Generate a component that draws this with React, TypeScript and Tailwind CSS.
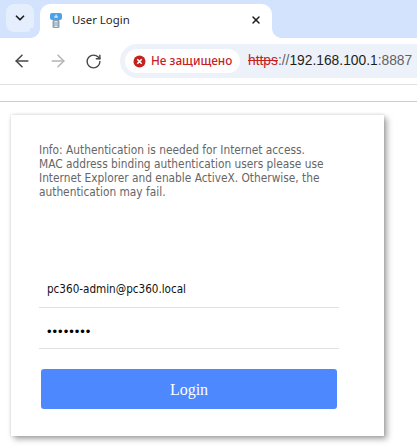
import { ArrowLeft, ArrowRight, ChevronDown, RotateCw, X } from "lucide-react";

function TabFavicon() {
  return (
    <svg width="12" height="15" viewBox="0 0 12 15" className="shrink-0">
      <rect x="0" y="0" width="12" height="7" rx="2" fill="#4aa3ea" />
      <rect x="5.5" y="1.5" width="1.2" height="3" fill="#e3f2fd" />
      <rect x="4" y="3.5" width="4" height="1" fill="#e3f2fd" />
      <rect x="2.5" y="7" width="7" height="8" rx="1" fill="#8fa3b5" />
      <rect x="4.5" y="8" width="3" height="6" fill="#dfe7ee" />
      <rect x="4.5" y="9.5" width="3" height="1" fill="#8fa3b5" />
      <rect x="4.5" y="11.5" width="3" height="1" fill="#8fa3b5" />
    </svg>
  );
}

function WarningIcon() {
  return (
    <svg width="13" height="13" viewBox="0 0 13 13" className="shrink-0">
      <circle cx="6.5" cy="6.5" r="6" fill="#c5221f" />
      <path d="M4.3 4.3l4.4 4.4M8.7 4.3l-4.4 4.4" stroke="#fff" strokeWidth="1.6" />
    </svg>
  );
}

export default function App() {
  return (
    <div className="flex h-[446px] w-[417px] flex-col overflow-hidden bg-white">
      {/* tab strip */}
      <div className="flex h-[38px] shrink-0 bg-[#d3e3fd] pt-1">
        <div className="ml-[6px] flex size-7 items-center justify-center rounded-lg bg-[#e4eefd]">
          <ChevronDown className="size-[14px] text-[#1f1f1f]" strokeWidth={3} />
        </div>
        <div className="relative ml-[6px] flex h-[34px] w-[232px] items-center rounded-t-[10px] bg-white pb-[2px] pl-[10px] pr-[10px]">
          <span className="absolute bottom-0 left-[-10px] size-[10px] bg-[radial-gradient(circle_at_0%_0%,#d3e3fd_9.5px,#ffffff_10.5px)]" />
          <span className="absolute bottom-0 right-[-10px] size-[10px] bg-[radial-gradient(circle_at_100%_0%,#d3e3fd_9.5px,#ffffff_10.5px)]" />
          <TabFavicon />
          <span className="ml-[10px] flex-1 text-[11.4px] text-[#1f1f1f] [font-family:'Noto_Sans',sans-serif]">
            User Login
          </span>
          <X className="size-[12px] text-[#1f1f1f]" strokeWidth={3} />
        </div>
      </div>

      {/* toolbar */}
      <div className="flex h-[46px] shrink-0 items-center rounded-tl-[10px] bg-white">
        <div className="flex w-[120px] items-center pl-3">
          <ArrowLeft className="size-5 text-[#474747]" strokeWidth={1.8} />
          <ArrowRight className="ml-4 size-5 text-[#b4b4b4]" strokeWidth={1.8} />
          <RotateCw className="ml-[17px] size-[17px] text-[#474747]" strokeWidth={2} />
        </div>
        <div className="flex h-[34px] flex-1 items-center rounded-l-[17px] bg-[#edf2fa] pl-[5px] [font-family:'Liberation_Sans',sans-serif]">
          <div className="flex h-[24px] w-[115px] shrink-0 items-center rounded-full bg-white pl-[8px]">
            <WarningIcon />
            <span className="ml-[5px] whitespace-nowrap text-[11.8px] font-medium text-[#c5221f] [font-family:'Noto_Sans',sans-serif]">
              Не защищено
            </span>
          </div>
          <span className="ml-2 whitespace-nowrap text-[13.8px] text-[#1f1f1f]">
            <span className="text-[#c5221f] line-through">https</span>
            <span className="text-[#5f6368]">://</span>192.168.100.1
            <span className="text-[#5f6368]">:8887</span>
          </span>
        </div>
      </div>

      {/* bookmarks bar remnant */}
      <div className="h-[18px] shrink-0 border-y border-[#e0e0e0] border-b-[#cccccc]" />

      {/* login card */}
      <div className="ml-[11px] mt-[13px] flex h-[321px] w-[373px] shrink-0 flex-col bg-white pl-[28px] pr-[45px] shadow-[3px_3px_6px_rgba(0,0,0,0.35),0_0_3px_rgba(0,0,0,0.15)]">
        <p className="mt-[28px] max-w-[288px] text-[11.8px] leading-[14px] text-[#666666] [font-family:'DejaVu_Sans_Condensed','DejaVu_Sans',sans-serif]">
          Info: Authentication is needed for Internet access. MAC address binding authentication users please use
          Internet Explorer and enable ActiveX. Otherwise, the authentication may fail.
        </p>
        <div className="mt-[68px] flex h-[41px] items-center border-b border-[#e0e0e0] pl-[8px] pt-[6px] text-[11.6px] text-[#111111] [font-family:'DejaVu_Sans_Condensed','DejaVu_Sans',sans-serif]">
          pc360-admin@pc360.local
        </div>
        <div className="flex h-[41px] items-center border-b border-[#e0e0e0] pl-[8px] pt-[8px] text-[13px] tracking-[1px] text-black [font-family:'Liberation_Sans',sans-serif]">
          ••••••••
        </div>
        <button
          className="ml-[2px] mt-5 h-10 w-[296px] rounded-[3px] bg-[#4d88ff] pt-[2px] text-[16px] text-white [font-family:'Liberation_Serif',serif]"
          type="button"
        >
          Login
        </button>
      </div>
    </div>
  );
}
